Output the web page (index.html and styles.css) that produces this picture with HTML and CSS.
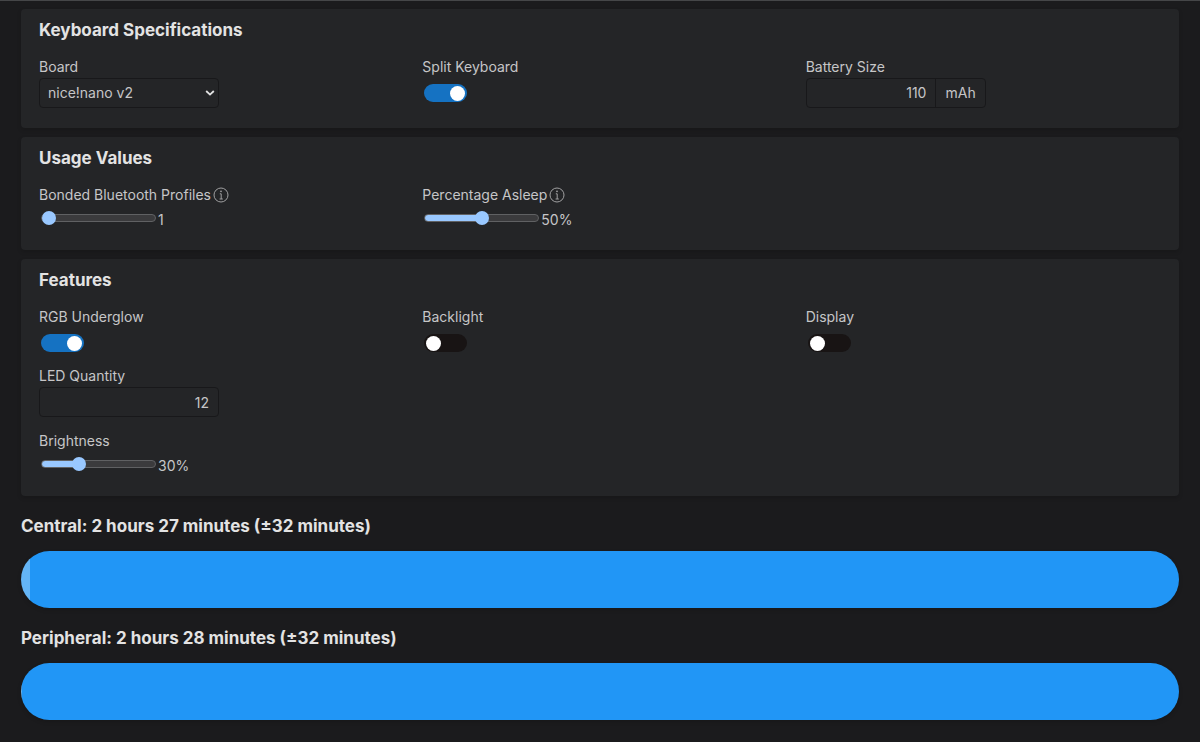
FILE: index.html
```html
<!DOCTYPE html>
<html lang="en">
<head>
<meta charset="utf-8">
<meta name="viewport" content="width=device-width, initial-scale=1">
<title>Power Profiler</title>
<link rel="stylesheet" href="styles.css">
</head>
<body>
<main class="page">
  <form class="cards">
    <section class="card">
      <h2 class="title">Keyboard Specifications</h2>
      <div class="columns">
        <div class="field">
          <label class="label" for="board">Board</label>
          <div class="select-wrap">
            <select class="box select" id="board"><option>nice!nano v2</option></select>
            <svg class="chevron" viewBox="0 0 10 6" aria-hidden="true"><path d="M1.2 1 L5 4.6 L8.8 1" fill="none" stroke="currentColor" stroke-width="1.8"/></svg>
          </div>
        </div>
        <div class="field">
          <label class="label" for="split">Split Keyboard</label>
          <input class="toggle" id="split" type="checkbox" checked>
        </div>
        <div class="field">
          <label class="label" for="battery">Battery Size</label>
          <div class="group">
            <input class="box group-input" id="battery" type="number" value="110">
            <span class="unit">mAh</span>
          </div>
        </div>
      </div>
    </section>

    <section class="card">
      <h2 class="title">Usage Values</h2>
      <div class="columns">
        <div class="field">
          <div class="label-row">
            <label class="label" for="profiles">Bonded Bluetooth Profiles</label>
            <svg class="info" viewBox="0 0 16 16" aria-hidden="true"><circle cx="8" cy="8" r="7" fill="none" stroke="currentColor"/><circle cx="8" cy="4.3" r="0.9" fill="currentColor"/><path d="M6.8 6.8H8.2V12M6.6 12H9.8" fill="none" stroke="currentColor"/></svg>
          </div>
          <div class="range-row">
            <input class="range" id="profiles" type="range" min="1" max="5" value="1" style="--fill: 0%">
            <output for="profiles">1</output>
          </div>
        </div>
        <div class="field">
          <div class="label-row">
            <label class="label" for="asleep">Percentage Asleep</label>
            <svg class="info" viewBox="0 0 16 16" aria-hidden="true"><circle cx="8" cy="8" r="7" fill="none" stroke="currentColor"/><circle cx="8" cy="4.3" r="0.9" fill="currentColor"/><path d="M6.8 6.8H8.2V12M6.6 12H9.8" fill="none" stroke="currentColor"/></svg>
          </div>
          <div class="range-row">
            <input class="range" id="asleep" type="range" min="0" max="100" value="50" style="--fill: 50%">
            <output for="asleep">50%</output>
          </div>
        </div>
      </div>
    </section>

    <section class="card">
      <h2 class="title">Features</h2>
      <div class="columns">
        <div class="stack">
          <div class="field">
            <label class="label" for="rgb">RGB Underglow</label>
            <input class="toggle" id="rgb" type="checkbox" checked>
          </div>
          <div class="field">
            <label class="label" for="leds">LED Quantity</label>
            <input class="box" id="leds" type="number" value="12">
          </div>
          <div class="field">
            <label class="label" for="brightness">Brightness</label>
            <div class="range-row">
              <input class="range" id="brightness" type="range" min="0" max="100" value="30" style="--fill: 30%">
              <output for="brightness">30%</output>
            </div>
          </div>
        </div>
        <div class="field">
          <label class="label" for="backlight">Backlight</label>
          <input class="toggle" id="backlight" type="checkbox">
        </div>
        <div class="field">
          <label class="label" for="display">Display</label>
          <input class="toggle" id="display" type="checkbox">
        </div>
      </div>
    </section>
  </form>

  <section class="result">
    <h3 class="title">Central: 2 hours 27 minutes (±32 minutes)</h3>
    <div class="bar"><div class="base" style="width: 0.8%"></div><div class="usage"></div></div>
  </section>
  <section class="result">
    <h3 class="title">Peripheral: 2 hours 28 minutes (±32 minutes)</h3>
    <div class="bar"><div class="base" style="width: 0.1%"></div><div class="usage"></div></div>
  </section>
</main>
</body>
</html>
```

FILE: styles.css
```css
* {
  box-sizing: border-box;
}

body {
  margin: 0;
  border-top: 1px solid #454648;
  background: #1b1b1d;
  color: #c6c6c7;
  font: 14px/20px Inter, "Liberation Sans", sans-serif;
}

.page {
  padding: 8px 21px 21px;
}

.cards {
  display: flex;
  flex-direction: column;
  gap: 9px;
  margin-bottom: 19px;
}

.card {
  padding: 10px 18px 20px;
  border-radius: 4px;
  background: #242527;
  box-shadow: 0 2px 4px rgba(0, 0, 0, 0.15);
}

.title {
  margin: 0;
  color: #e3e3e3;
  font-size: 17px;
  font-weight: 700;
  line-height: 22px;
}

.card .title {
  margin-bottom: 16px;
}

.columns {
  display: grid;
  grid-template-columns: repeat(3, 1fr);
  column-gap: 28px;
}

.stack {
  display: flex;
  flex-direction: column;
  gap: 14px;
}

.field {
  display: flex;
  flex-direction: column;
  align-items: flex-start;
}

.label {
  display: block;
}

.label-row {
  display: flex;
  align-items: center;
  gap: 2px;
}

.info {
  width: 16px;
  height: 16px;
  color: #a0a0a1;
}

.box {
  width: 180px;
  height: 30px;
  margin: 1px 0 0;
  padding: 0 9px;
  border: 1px solid #18181a;
  border-radius: 4px;
  background: transparent;
  color: inherit;
  font: inherit;
  text-align: right;
  appearance: none;
}

.box::-webkit-inner-spin-button {
  display: none;
}

.select-wrap {
  display: flex;
  position: relative;
}

.select {
  padding: 0 8px;
  text-align: left;
}

.chevron {
  position: absolute;
  top: 13px;
  right: 4px;
  width: 10px;
  height: 6px;
  color: #e3e3e3;
  pointer-events: none;
}

.group {
  display: flex;
  width: 180px;
  height: 30px;
  margin-top: 1px;
  border: 1px solid #18181a;
  border-radius: 4px;
}

.group-input {
  flex: 1;
  min-width: 0;
  height: auto;
  margin: 0;
  border: 0;
}

.unit {
  padding: 4px 9px;
  border-left: 1px solid #18181a;
}

.toggle {
  width: 43px;
  height: 18px;
  margin: 7px 2px 0;
  padding: 2px;
  border-radius: 9px;
  background: #181414;
  appearance: none;
  display: flex;
}

.toggle::before {
  content: "";
  width: 15px;
  height: 15px;
  border-radius: 50%;
  background: #fff;
  margin: auto 0;
}

.toggle:checked {
  justify-content: flex-end;
  background: #1572c2;
}

.range-row {
  display: flex;
  align-items: flex-end;
  gap: 2px;
  height: 25px;
}

.range {
  width: 115px;
  height: 25px;
  margin: 0 0 0 2px;
  background: transparent;
  appearance: none;
}

.range::-webkit-slider-runnable-track {
  height: 8px;
  border: 1px solid #606163;
  border-radius: 4px;
  background: linear-gradient(to right, #99c8ff var(--fill), #3b3b3d var(--fill));
}

.range::-webkit-slider-thumb {
  width: 14px;
  height: 14px;
  margin-top: -4px;
  border-radius: 50%;
  background: #99c8ff;
  appearance: none;
}

.result {
  margin-bottom: 19px;
}

.result .title {
  margin-bottom: 14px;
}

.bar {
  display: flex;
  height: 57px;
  overflow: hidden;
  border-radius: 29px;
  box-shadow: 0 2px 4px rgba(0, 0, 0, 0.15);
}

.base {
  background: #64b5f6;
}

.usage {
  flex: 1;
  background: #2196f6;
}
```
